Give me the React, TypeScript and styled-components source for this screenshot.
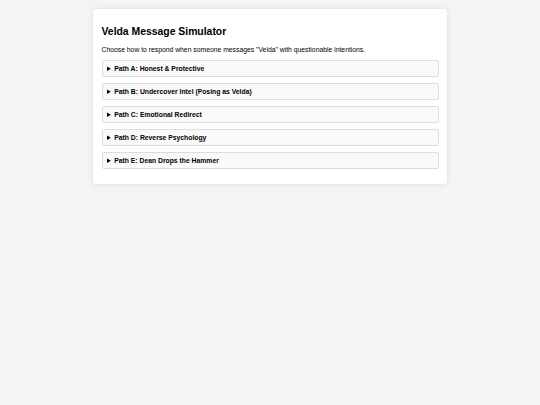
import React from 'react';
import styled, { createGlobalStyle } from 'styled-components';

const GlobalStyle = createGlobalStyle`
  body {
    margin: 0;
    background: #f4f4f4;
    font-family: "Liberation Sans", Arial, sans-serif;
  }
`;

const paths = [
  'Path A: Honest & Protective',
  'Path B: Undercover Intel (Posing as Velda)',
  'Path C: Emotional Redirect',
  'Path D: Reverse Psychology',
  'Path E: Dean Drops the Hammer',
];

const App = () => {
  return (
    <>
      <GlobalStyle />
      <Page>
        <Card>
          <Title>Velda Message Simulator</Title>
          <Intro>Choose how to respond when someone messages "Velda" with questionable intentions.</Intro>
          <PathList>
            {paths.map((p) => (
              <PathItem key={p}>
                <PathSummary>{p}</PathSummary>
              </PathItem>
            ))}
          </PathList>
        </Card>
      </Page>
    </>
  );
};

export default App;

const Page = styled.div`
  padding: 9px 0;
  display: flex;
  justify-content: center;
`;

const Card = styled.div`
  width: 354px;
  box-sizing: border-box;
  background: #ffffff;
  border-radius: 4px;
  box-shadow: 0 0 6px rgba(0, 0, 0, 0.1);
  padding: 17px 8.5px 15px;
`;

const Title = styled.h2`
  margin: 0 0 8px;
  font-size: 10.4px;
  line-height: 12px;
  font-weight: bold;
  color: #000;
`;

const Intro = styled.p`
  margin: 0 0 6px;
  font-size: 6.8px;
  line-height: 8px;
  color: #000;
`;

const PathList = styled.div`
  display: flex;
  flex-direction: column;
  gap: 6px;
`;

const PathItem = styled.details`
  background: #f9f9f9;
  border: 1px solid #dddddd;
  border-radius: 2px;
`;

const PathSummary = styled.summary`
  padding: 0 4.5px;
  height: 15px;
  line-height: 15px;
  font-size: 6.8px;
  font-weight: bold;
  cursor: pointer;
`;
